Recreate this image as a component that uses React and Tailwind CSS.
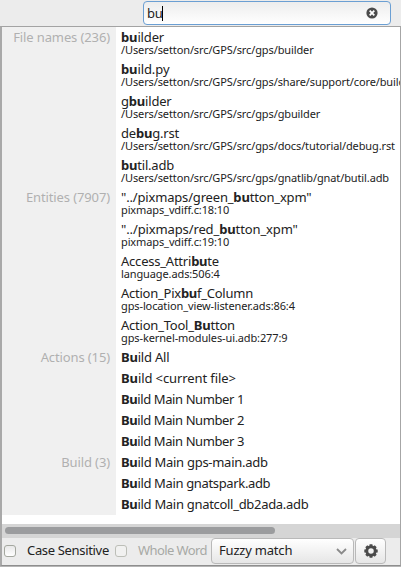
import React from 'react';

const two = [
  { t: ['', 'bu', 'ilder'], p: '/Users/setton/src/GPS/src/gps/builder', g: 'File names (236)', k: 'tracking-[-0.15px]' },
  { t: ['', 'bu', 'ild.py'], p: '/Users/setton/src/GPS/src/gps/share/support/core/build.py', k: 'tracking-[-0.1px]' },
  { t: ['g', 'bu', 'ilder'], p: '/Users/setton/src/GPS/src/gps/gbuilder', k: 'tracking-[-0.2px]' },
  { t: ['de', 'bu', 'g.rst'], p: '/Users/setton/src/GPS/src/gps/docs/tutorial/debug.rst', k: 'tracking-[-0.2px]' },
  { t: ['', 'bu', 'til.adb'], p: '/Users/setton/src/GPS/src/gps/gnatlib/gnat/butil.adb', k: 'tracking-[-0.2px]' },
  { t: ['"../pixmaps/green_', 'bu', 'tton_xpm"'], p: 'pixmaps_vdiff.c:18:10', g: 'Entities (7907)', k: 'tracking-[-0.17px]' },
  { t: ['"../pixmaps/red_', 'bu', 'tton_xpm"'], p: 'pixmaps_vdiff.c:19:10', k: 'tracking-[-0.12px]' },
  { t: ['Access_Attri', 'bu', 'te'], p: 'language.ads:506:4', k: 'tracking-[-0.22px]' },
  { t: ['Action_Pix', 'bu', 'f_Column'], p: 'gps-location_view-listener.ads:86:4', k: 'tracking-[-0.25px]' },
  { t: ['Action_Tool_', 'Bu', 'tton'], p: 'gps-kernel-modules-ui.adb:277:9', k: 'tracking-[-0.22px]' },
];

const one = [
  { t: ['', 'Bu', 'ild All'], g: 'Actions (15)', k: 'tracking-[-0.2px]' },
  { t: ['', 'Bu', 'ild <current file>'], k: 'tracking-[-0.1px]' },
  { t: ['', 'Bu', 'ild Main Number 1'], k: 'tracking-[-0.4px]' },
  { t: ['', 'Bu', 'ild Main Number 2'], k: 'tracking-[-0.4px]' },
  { t: ['', 'Bu', 'ild Main Number 3'], k: 'tracking-[-0.4px]' },
  { t: ['', 'Bu', 'ild Main gps-main.adb'], g: 'Build (3)', k: 'tracking-[-0.28px]' },
  { t: ['', 'Bu', 'ild Main gnatspark.adb'], k: 'tracking-[-0.35px]' },
  { t: ['', 'Bu', 'ild Main gnatcoll_db2ada.adb'], k: 'tracking-[-0.3px]' },
];

function Row({ row }) {
  return (
    <div className={row.p ? 'flex h-8' : 'flex h-[21px]'}>
      <div className="w-[114px] shrink-0 bg-[#f0f0f0] pr-[6px] text-right text-[13px] leading-[21px] tracking-[-0.12px] text-[#b0b0b0]">
        {row.g}
      </div>
      <div className="min-w-0 flex-1 overflow-hidden whitespace-pre pl-[5px] text-[#222]">
        <div className={`text-[13px] leading-[21px] ${row.p ? 'h-4' : 'h-[21px]'} ${row.k}`}>
          {row.t[0]}
          <b className="font-bold">{row.t[1]}</b>
          {row.t[2]}
        </div>
        {row.p && <div className="text-[11px] leading-[13px] tracking-[-0.115px]">{row.p}</div>}
      </div>
    </div>
  );
}

function Gear() {
  return (
    <svg width="16" height="16" viewBox="0 0 16 16" fill="none" stroke="#4b4b4b">
      <circle cx="8" cy="8" r="4.2" strokeWidth="2.9" />
      <g strokeWidth="2.9">
        <path d="M8 1.3v2.5M8 12.2v2.5M1.3 8h2.5M12.2 8h2.5" />
        <path d="M3.3 3.3l1.8 1.8M10.9 10.9l1.8 1.8M12.7 3.3l-1.8 1.8M5.1 10.9l-1.8 1.8" />
      </g>
    </svg>
  );
}

export default function App() {
  return (
    <div className="flex h-[567px] w-[401px] flex-col overflow-hidden bg-[#ececec] font-['Noto_Sans','Open_Sans',sans-serif]">
      <div className="flex h-[26px] shrink-0 pl-[143px] pt-px">
        <div className="flex h-6 w-[248px] items-center justify-between rounded-[4px] border border-[#6b9fd3] bg-linear-to-b from-[#ededed] to-white pl-[3px] pr-3">
          <div className="flex items-center text-[13px] leading-5 tracking-[-0.3px] text-[#222]">
            bu<span className="h-[15px] w-px bg-black" />
          </div>
          <svg width="12" height="12" viewBox="0 0 12 12" className="-mt-px">
            <circle cx="6" cy="6" r="5.6" fill="#4b4b4b" />
            <path d="M3.7 3.7l4.6 4.6M8.3 3.7l-4.6 4.6" stroke="#fff" strokeWidth="1.8" />
          </svg>
        </div>
      </div>
      <div className="flex h-[540px] shrink-0 flex-col border-b border-l-2 border-r border-t border-b-[#8e8e8e] border-l-[#a9a9a9] border-r-[#a6a6a6] border-t-[#a3a3a3] bg-[#ececec]">
        <div className="h-[497px] shrink-0 bg-white">
          {two.map((r) => <Row key={r.p} row={r} />)}
          {one.map((r) => <Row key={r.t[2]} row={r} />)}
        </div>
        <div className="h-[14px] shrink-0 bg-[#d5d5d5] pl-[3px] pt-[3px]">
          <div className="h-[7px] w-[270px] rounded-full bg-[#9b9c9e]" />
        </div>
        <div className="flex h-[26px] items-center whitespace-nowrap pl-[2px] text-[13px]">
          <span className="h-3 w-3 shrink-0 rounded-[3px] border border-[#a4a79f] bg-linear-to-b from-[#e8e8e8] to-white" />
          <span className="w-[99px] shrink-0 pl-[11px] tracking-[-0.33px] text-[#222]">Case Sensitive</span>
          <span className="h-3 w-3 shrink-0 rounded-[3px] border border-[#bcbeb7] bg-[#f1f1f0]" />
          <span className="w-[84px] shrink-0 pl-[11px] tracking-[-0.6px] text-[#a7a9a5]">Whole Word</span>
          <div className="flex h-[26px] w-[143px] shrink-0 items-center justify-between rounded-[4px] border border-[#b9b9b9] bg-linear-to-b from-white to-[#e6e6e6] pl-[7px] pr-[6px] text-[#222]">
            <span className="tracking-[-0.2px]">Fuzzy match</span>
            <svg width="11" height="7" viewBox="0 0 11 7" fill="none" stroke="#8a8a8a" strokeWidth="1.8">
              <path d="M1 1l4.5 4.5L10 1" />
            </svg>
          </div>
          <div className="ml-px flex h-[26px] w-[31px] shrink-0 items-center justify-center rounded-[4px] border border-[#b9b9b9] bg-linear-to-b from-white to-[#e6e6e6]">
            <Gear />
          </div>
        </div>
      </div>
      <div className="h-px bg-[#b5b5b5]" />
    </div>
  );
}
